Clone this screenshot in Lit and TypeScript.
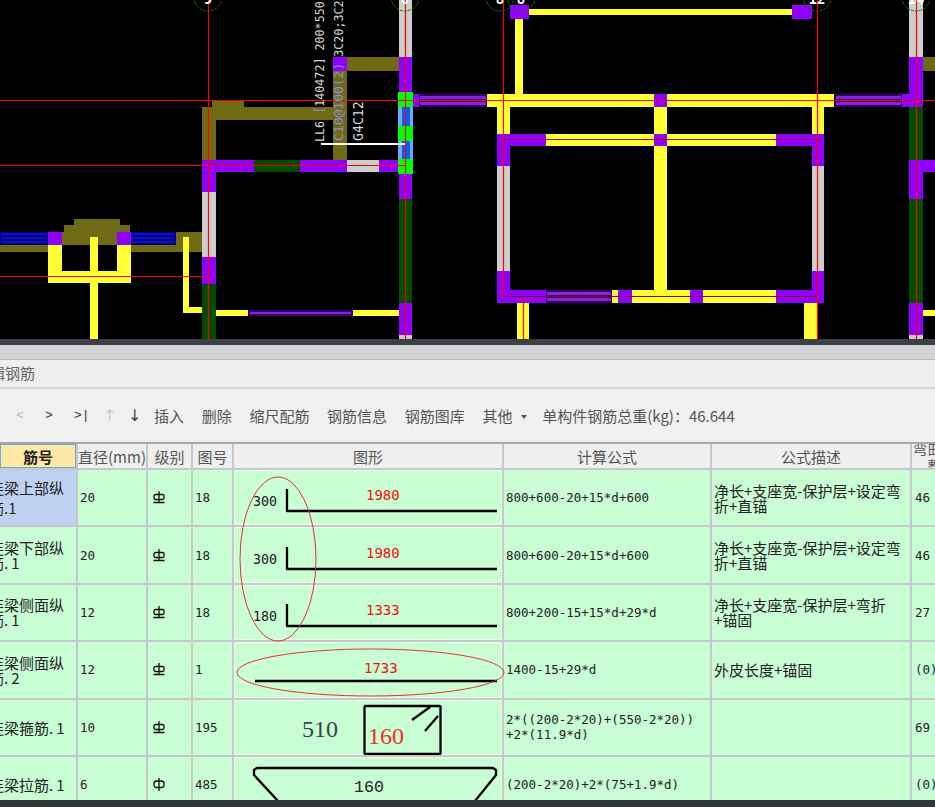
import { LitElement, html, svg, css } from 'lit';
import { customElement } from 'lit/decorators.js';

const PURPLE = '#8f00ff';
const GREY = '#cdcdcd';
const DARK = '#004d00';
const YELLOW = '#ffff33';
const OLIVE = '#6e6b14';
const LIME = '#00ff00';

type Box = [number, number, number, number, string];

// x, y, w, h, fill
const BOXES: Box[] = [
  // olive beams
  [202, 107, 14, 53, OLIVE], [202, 107, 138, 13, OLIVE], [212, 101, 32, 6, OLIVE],
  [333, 58, 14, 102, OLIVE], [347, 57, 52, 14, OLIVE],
  [74, 219, 46, 6, OLIVE], [64, 225, 66, 7, OLIVE], [62, 232, 55, 13, OLIVE],
  [0, 245, 48, 7, OLIVE], [176, 232, 26, 20, OLIVE], [130, 245, 53, 7, OLIVE],
  [333, 57, 14, 14, PURPLE],
  // lower left detail
  [48, 232, 14, 13, PURPLE], [117, 232, 14, 13, PURPLE],
  [48, 245, 14, 38, YELLOW], [117, 245, 14, 38, YELLOW], [48, 271, 83, 12, YELLOW],
  [90, 237, 8, 102, YELLOW], [183, 237, 6, 76, YELLOW], [183, 307, 19, 6, YELLOW],
  [216, 310, 32, 6, YELLOW], [353, 310, 46, 6, YELLOW],
  // column at 202
  [202, 160, 14, 32, PURPLE], [202, 192, 14, 65, GREY], [202, 257, 14, 27, PURPLE], [202, 284, 14, 55, DARK],
  // beam at 160
  [216, 160, 38, 12, PURPLE], [254, 160, 46, 12, DARK], [300, 160, 47, 12, PURPLE],
  [347, 160, 32, 12, GREY], [379, 160, 20, 12, PURPLE],
  // column at 399
  [399, 0, 13, 57, GREY], [399, 57, 13, 35, PURPLE], [399, 174, 13, 25, PURPLE],
  [399, 199, 13, 104, DARK], [399, 303, 13, 32, PURPLE], [399, 335, 13, 4, GREY],
  [398, 107, 15, 19, '#6ea8ff'], [398, 141, 15, 18, '#6ea8ff'],
  [402, 107, 8, 19, '#0a5fe8'], [402, 141, 8, 18, '#0a5fe8'],
  [398, 92, 15, 15, LIME], [398, 126, 15, 15, LIME], [398, 159, 15, 15, LIME],
  [413, 94, 6, 13, PURPLE],
  // top of the right frame
  [510, 5, 19, 14, PURPLE], [529, 9, 263, 6, YELLOW], [792, 5, 20, 14, PURPLE], [515, 19, 8, 75, YELLOW],
  [487, 94, 347, 13, YELLOW], [654, 94, 13, 13, PURPLE],
  [497, 107, 13, 27, YELLOW], [812, 107, 12, 27, YELLOW], [654, 107, 13, 27, YELLOW],
  [546, 134, 230, 12, YELLOW], [497, 134, 49, 12, PURPLE], [776, 134, 48, 12, PURPLE], [654, 134, 13, 12, PURPLE],
  [654, 146, 13, 144, YELLOW],
  [497, 146, 13, 20, PURPLE], [497, 166, 13, 105, GREY], [497, 271, 13, 19, PURPLE],
  [812, 146, 12, 20, PURPLE], [812, 166, 12, 105, GREY], [812, 271, 12, 19, PURPLE],
  [612, 290, 164, 13, YELLOW], [497, 290, 49, 13, PURPLE], [618, 290, 14, 13, PURPLE],
  [690, 290, 13, 13, PURPLE], [776, 290, 48, 13, PURPLE],
  [517, 303, 12, 36, YELLOW], [804, 303, 13, 36, YELLOW],
  // far right column
  [909, 0, 14, 57, GREY], [909, 57, 14, 50, PURPLE], [902, 94, 7, 13, PURPLE], [909, 107, 14, 53, DARK],
  [909, 160, 14, 39, PURPLE], [923, 160, 12, 12, PURPLE], [909, 199, 14, 104, DARK],
  [909, 303, 14, 32, PURPLE], [909, 335, 14, 4, GREY], [923, 57, 12, 14, OLIVE], [923, 310, 12, 6, YELLOW],
];

// x, y, w, h, ground, line colour, line offsets
const VIOLET = ['#33006b', '#8a1fe0'];
const NAVY = ['#00006e', '#0c0cd8'];
const STRIPS: [number, number, number, number, string[], number[]][] = [
  [419, 94, 68, 13, VIOLET, [2, 8]],
  [835, 94, 67, 13, VIOLET, [2, 8]],
  [546, 290, 66, 13, VIOLET, [2, 8]],
  [0, 232, 48, 13, NAVY, [1, 5, 9]],
  [131, 232, 45, 13, NAVY, [1, 5, 9]],
];

// x1, y1, x2, y2, colour
const RED_LINES: [number, number, number, number, string][] = [
  [208.5, 0, 208.5, 339, '#ff0000'], [405.5, 0, 405.5, 339, '#ff0000'],
  [503.5, 0, 503.5, 296, '#ff0000'], [817.5, 0, 817.5, 339, '#ff0000'],
  [916.5, 0, 916.5, 339, '#ff0000'], [523.5, 296, 523.5, 339, '#ff0000'],
  [0, 100.5, 935, 100.5, '#ff0000'], [0, 165.5, 405, 165.5, '#ff0000'], [0, 276.5, 208, 276.5, '#ff0000'],
  [503, 139.5, 817, 139.5, '#a00030'], [503, 296.5, 817, 296.5, '#900020'],
];

const AXES: [number, string][] = [[208, '9'], [405, '0'], [500, '8'], [521, '8'], [817, '12'], [916, '14']];

type Row = { name: string[]; dia: string; grade: 'hrb' | 'hpb'; no: string; shape: unknown; formula: string[]; desc: string[]; bend: string };

const hook = (side: string, total: string) => svg`
  <path d="M53 19V41H263" class="bar"></path>
  <text x="19" y="36" class="dim">${side}</text>
  <text x="132" y="30" class="len">${total}</text>`;

const ROWS: Row[] = [
  { name: ['连梁上部纵', '筋.1'], dia: '20', grade: 'hrb', no: '18', shape: hook('300', '1980'),
    formula: ['800+600-20+15*d+600'], desc: ['净长+支座宽-保护层+设定弯', '折+直锚'], bend: '46' },
  { name: ['连梁下部纵', '筋.\u20091'], dia: '20', grade: 'hrb', no: '18', shape: hook('300', '1980'),
    formula: ['800+600-20+15*d+600'], desc: ['净长+支座宽-保护层+设定弯', '折+直锚'], bend: '46' },
  { name: ['连梁侧面纵', '筋.\u20091'], dia: '12', grade: 'hrb', no: '18', shape: hook('180', '1333'),
    formula: ['800+200-15+15*d+29*d'], desc: ['净长+支座宽-保护层+弯折', '+锚固'], bend: '27' },
  { name: ['连梁侧面纵', '筋.\u20092'], dia: '12', grade: 'hrb', no: '1',
    shape: svg`<path d="M21 39H263" class="bar"></path><text x="130" y="31" class="len">1733</text>`,
    formula: ['1400-15+29*d'], desc: ['外皮长度+锚固'], bend: '(0)' },
  { name: ['连梁箍筋.\u20091'], dia: '10', grade: 'hrb', no: '195',
    shape: svg`
      <rect x="130.500" y="6" width="76" height="48" rx="1" class="bar"></rect>
      <path d="M178 20L196 7M191 31L204 16" class="bar"></path>
      <text x="68" y="37" class="big">510</text>
      <text x="134" y="44" class="big red">160</text>`,
    formula: ['2*((200-2*20)+(550-2*20))', '+2*(11.9*d)'], desc: [], bend: '69' },
  { name: ['连梁拉筋.\u20091'], dia: '6', grade: 'hpb', no: '485',
    shape: svg`
      <path d="M44 44L20 18V13L23 11H259L262 13V18L241 44" class="bar"></path>
      <text x="120" y="35" class="mid">160</text>`,
    formula: ['(200-2*20)+2*(75+1.9*d)'], desc: [], bend: '(0)' },
];

@customElement('app-root')
export class AppRoot extends LitElement {
  static styles = css`
    :host {
      display: flex;
      flex-direction: column;
      position: relative;
      width: 935px;
      height: 807px;
      overflow: hidden;
      background: #eee;
      font-family: 'Noto Sans CJK SC', 'Noto Sans', sans-serif;
      color: #222;
    }
    .cad { display: block; flex: none; background: #000; }
    .cad text { font-family: 'DejaVu Sans Mono', monospace; font-size: 11.700px; fill: #d8d8d8; }
    .cad .axis { font-size: 14px; font-weight: 700; fill: #fff; text-anchor: middle; }
    .cad .pale { fill: #8e8ed8; }
    .cad .wide { font-size: 13px; }
    .cad .plain { font-size: 11.700px; fill: #d8d8d8; }
    .cad .tag { font-size: 13.200px; }
    .sep { flex: none; height: 6px; background: #3c4043; }
    .band { flex: none; height: 14px; background: #d2d3d7; border-bottom: 1px solid #bbb; }
    .title {
      flex: none;
      height: 27px;
      line-height: 25px;
      font-size: 15px;
      color: #666;
      background: #eee;
      border-bottom: 2px solid #d4d4d4;
      white-space: nowrap;
    }
    .title span { margin-left: -25px; }
    .tools {
      flex: none;
      height: 55px;
      box-sizing: border-box;
      padding: 0 0 0 16px;
      display: flex;
      align-items: center;
      font-size: 15px;
      color: #555;
      white-space: nowrap;
      background: #f0f0f0;
      border-bottom: 2px solid #a8a8a8;
    }
    .nav { font-family: 'Liberation Mono', monospace; font-size: 13px; width: 29px; color: #333; }
    .nav.off { color: #bbb; }
    .arrow { font-size: 16px; width: 25px; color: #444; font-family: 'DejaVu Sans', sans-serif; }
    .arrow.off { color: #ccc; }
    .arrow.last { width: 26px; }
    .cmd { margin-right: 17.700px; }
    .caret {
      width: 0;
      height: 0;
      margin: 2px 15px 0 -9px;
      border: 3px solid transparent;
      border-top: 4px solid #555;
      border-bottom: 0;
    }
    .sheet {
      flex: 1;
      min-height: 0;
      position: relative;
      overflow: hidden;
      display: grid;
      grid-template-columns: 76px 68px 43px 39px 268px 206px 198px 46px;
      grid-template-rows: 24px repeat(6, 55.400px);
      gap: 2px;
      background: #c8c8cc;
    }
    .head {
      background: #efefef;
      display: flex;
      align-items: center;
      justify-content: center;
      font-size: 15px;
      color: #555;
      white-space: nowrap;
      overflow: hidden;
    }
    .head.on {
      background: #ffe8a6;
      box-shadow: inset 0 0 0 1px #6fa8dc;
      font-weight: 700;
      color: #222;
    }
    .head.stack { flex-direction: column; justify-content: flex-start; line-height: 18px; }
    .head.stack span:first-child { margin-top: -5px; }
    .cell {
      background: #c9fdd3;
      display: flex;
      flex-direction: column;
      justify-content: center;
      align-items: flex-start;
      padding-left: 2px;
      font-family: 'DejaVu Sans Mono', monospace;
      font-size: 12.500px;
      line-height: 15px;
      color: #222;
      white-space: nowrap;
      overflow: hidden;
    }
    .name { padding: 0; font-size: 15px; line-height: 15px; font-family: 'Noto Sans CJK SC', sans-serif; }
    .name span { margin-left: -11px; }
    .name.on { background: #bfd1f0; line-height: 20px; }
    .desc { font-size: 15px; font-family: 'Noto Sans CJK SC', sans-serif; line-height: 15px; }
    .shape { padding: 0; box-shadow: inset 0 0 0 1px #e6ffeb; }
    .shape svg { display: block; flex: none; }
    .bar { fill: none; stroke: #000; stroke-width: 2.300; stroke-linejoin: round; }
    .shape text { font-family: 'DejaVu Sans Mono', monospace; }
    .dim { font-size: 13.300px; fill: #222; }
    .len { font-size: 14px; fill: #f01010; }
    .shape .big { font-size: 24px; fill: #33454c; font-family: 'Liberation Serif', serif; }
    .shape .big.red { fill: #f0302a; }
    .shape .mid { font-size: 16.600px; fill: #222; font-family: 'Liberation Mono', monospace; }
    .grade { display: block; margin-left: 3px; }
    .grade * { fill: none; stroke: #111; stroke-width: 1.300; }
    .rings { position: absolute; left: 0; top: 0; pointer-events: none; }
    .foot { flex: none; height: 7px; background: #333639; }
    .num { padding-left: 3px; }
  `;

  private _cad() {
    return html`
      <svg class="cad" width="935" height="339" viewBox="0 0 935 339">
        ${BOXES.map(([x, y, w, h, c]) => svg`<rect x=${x} y=${y} width=${w} height=${h} fill=${c}></rect>`)}
        ${STRIPS.map(([x, y, w, h, [ground, line], offs]) => svg`
          <rect x=${x} y=${y} width=${w} height=${h} fill=${ground}></rect>
          ${offs.map((o) => svg`<rect x=${x + 1} y=${y + o} width=${w - 2} height=${offs.length > 2 ? 2 : 3} fill=${line}></rect>`)}`)}
        <rect x="248" y="310" width="105" height="6" fill="#33006b"></rect>
        <rect x="250" y="312" width="101" height="2" fill="#8a1fe0"></rect>
        ${RED_LINES.map(([a, b, c, d, col]) => svg`<line x1=${a} y1=${b} x2=${c} y2=${d} stroke=${col} stroke-width="1.200"></line>`)}
        ${AXES.map(([x, t]) => svg`
          <circle cx=${x} cy="-3" r="14" fill="none" stroke="#0a7a0a" stroke-dasharray="3 1"></circle>
          <text x=${x} y="4" class="axis">${t}</text>`)}
        <rect x="321" y="143" width="84" height="2" fill="#fff"></rect>
        <g transform="translate(323.500 142) rotate(-90)"><text>LL6 <tspan class="pale">[</tspan>140472] 200*550</text></g>
        <g transform="translate(343 141) rotate(-90)"><text class="pale wide">C10@100(2)<tspan dx="6" class="plain">3C20;3C2</tspan></text></g>
        <g transform="translate(363 141) rotate(-90)"><text class="tag">G4C12</text></g>
      </svg>
    `;
  }

  private _grade(kind: Row['grade']) {
    return kind === 'hrb'
      ? html`<svg class="grade" width="12" height="13" viewBox="0 0 12 13">
          <rect x="1" y="3.500" width="10" height="5" rx="1.500"></rect>
          <path d="M6 0V11.500M0.500 11.500H11.500"></path>
        </svg>`
      : html`<svg class="grade" width="12" height="13" viewBox="0 0 12 13">
          <rect x="1" y="3" width="10" height="6.500" rx="2.500"></rect>
          <path d="M6 0V13"></path>
        </svg>`;
  }

  private _row(r: Row, i: number) {
    return html`
      <div class="cell name ${i === 0 ? 'on' : ''}">${r.name.map((l) => html`<span>${l}</span>`)}</div>
      <div class="cell">${r.dia}</div>
      <div class="cell">${this._grade(r.grade)}</div>
      <div class="cell">${r.no}</div>
      <div class="cell shape">
        <svg width="268" height="55" viewBox="0 0 268 55">${r.shape}</svg>
      </div>
      <div class="cell">${r.formula.map((l) => html`<div>${l}</div>`)}</div>
      <div class="cell desc">${r.desc.map((l) => html`<div>${l}</div>`)}</div>
      <div class="cell num">${r.bend}</div>
    `;
  }

  render() {
    return html`
      ${this._cad()}
      <div class="sep"></div>
      <div class="band"></div>
      <div class="title"><span>编辑钢筋</span></div>
      <div class="tools">
        <span class="nav off">&lt;</span>
        <span class="nav">&gt;</span>
        <span class="nav">&gt;|</span>
        <span class="arrow off">↑</span>
        <span class="arrow last">↓</span>
        <span class="cmd">插入</span>
        <span class="cmd">删除</span>
        <span class="cmd">缩尺配筋</span>
        <span class="cmd">钢筋信息</span>
        <span class="cmd">钢筋图库</span>
        <span class="cmd">其他</span>
        <span class="caret"></span>
        <span>单构件钢筋总重(kg)：46.644</span>
      </div>
      <div class="sheet">
        <div class="head on">筋号</div>
        <div class="head">直径(mm)</div>
        <div class="head">级别</div>
        <div class="head">图号</div>
        <div class="head">图形</div>
        <div class="head">计算公式</div>
        <div class="head">公式描述</div>
        <div class="head stack"><span>弯曲调</span><span>整</span></div>
        ${ROWS.map((r, i) => this._row(r, i))}
        <svg class="rings" width="935" height="356">
          <ellipse cx="278" cy="115" rx="38" ry="82" fill="none" stroke="#e83030"></ellipse>
          <ellipse cx="370.500" cy="228.500" rx="133.500" ry="23.500" fill="none" stroke="#e83030"></ellipse>
        </svg>
      </div>
      <div class="foot"></div>
    `;
  }
}
